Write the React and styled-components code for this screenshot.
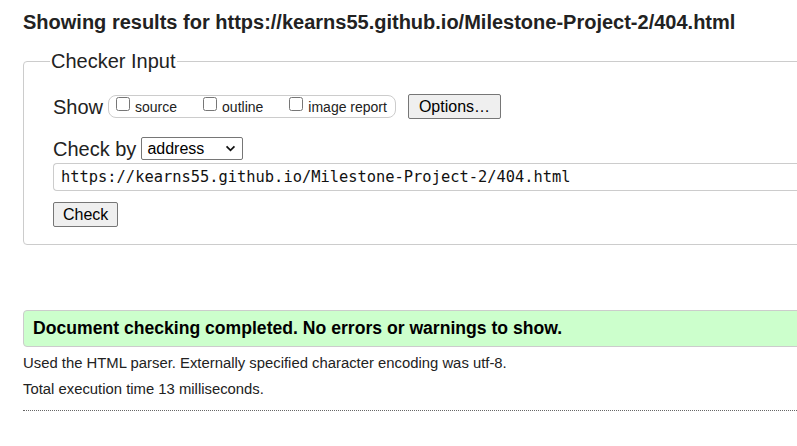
import React, { useState } from "react";
import styled, { createGlobalStyle } from "styled-components";

const url = "https://kearns55.github.io/Milestone-Project-2/404.html";

const GlobalStyle = createGlobalStyle`
  html, body {
    margin: 0;
    padding: 0;
    background: #fff;
    overflow: hidden;
  }
  body {
    font-family: "Liberation Sans", Arial, sans-serif;
    color: #222;
  }
`;

function App() {
  const [show, setShow] = useState({ source: false, outline: false, image: false });
  const [checkBy, setCheckBy] = useState("address");
  const [doc, setDoc] = useState(url);

  const toggle = key => setShow({ ...show, [key]: !show[key] });

  return (
    <Page>
      <GlobalStyle />
      <Heading>Showing results for {url}</Heading>
      <Fieldset>
        <Legend>Checker Input</Legend>
        <Row>
          <Label>Show</Label>
          <CheckGroup>
            <CheckItem>
              <Box type="checkbox" checked={show.source} onChange={() => toggle("source")} />
              source
            </CheckItem>
            <CheckItem>
              <Box type="checkbox" checked={show.outline} onChange={() => toggle("outline")} />
              outline
            </CheckItem>
            <CheckItem>
              <Box type="checkbox" checked={show.image} onChange={() => toggle("image")} />
              image report
            </CheckItem>
          </CheckGroup>
          <Button wide>Options…</Button>
        </Row>
        <Row top={17}>
          <Label>Check by</Label>
          <SelectWrap>
            <Select value={checkBy} onChange={e => setCheckBy(e.target.value)}>
              <option value="address">address</option>
              <option value="upload">file upload</option>
              <option value="text">text input</option>
            </Select>
            <Chevron viewBox="0 0 12 8">
              <path d="M1.5 1.5 L6 6 L10.5 1.5" fill="none" stroke="#111" strokeWidth="2" />
            </Chevron>
          </SelectWrap>
        </Row>
        <UrlInput value={doc} onChange={e => setDoc(e.target.value)} />
        <Row top={11}>
          <Button>Check</Button>
        </Row>
      </Fieldset>
      <Success>Document checking completed. No errors or warnings to show.</Success>
      <Info>Used the HTML parser. Externally specified character encoding was utf-8.</Info>
      <Info>Total execution time 13 milliseconds.</Info>
      <Rule />
    </Page>
  );
}

const Page = styled.div`
  width: 860px;
  padding: 10px 0 0 23px;
`;

const Heading = styled.h2`
  margin: 0;
  font-size: 20px;
  font-weight: bold;
  line-height: 24px;
  color: #222;
`;

const Fieldset = styled.fieldset`
  margin: 17px 0 0 0;
  padding: 23px 0 17px 29px;
  border: 1px solid #ccc;
  border-radius: 4px;
  min-width: 0;
`;

const Legend = styled.legend`
  margin-left: -3px;
  padding: 0 1px;
  font-size: 20px;
  line-height: 20px;
  color: #222;
`;

const Row = styled.div`
  display: flex;
  align-items: center;
  height: 25px;
  margin-top: ${p => (p.top ? p.top : 0)}px;
`;

const Label = styled.span`
  font-size: 20px;
  line-height: 24px;
  margin-right: 5px;
`;

const CheckGroup = styled.div`
  display: flex;
  align-items: center;
  gap: 26px;
  height: 21px;
  padding: 0 8px 0 7px;
  border: 1px solid #ccc;
  border-radius: 8px;
  margin-right: 12px;
`;

const CheckItem = styled.label`
  display: flex;
  align-items: center;
  font-size: 14px;
  color: #222;
`;

const Box = styled.input`
  width: 14px;
  height: 14px;
  margin: 0 5px 5px 0;
`;

const Button = styled.button`
  font-family: "Liberation Sans", Arial, sans-serif;
  font-size: 16px;
  color: #000;
  height: 25px;
  padding: 0 ${p => (p.wide ? 10 : 9)}px;
  background: #efefef;
  border: 1px solid #767676;
  border-radius: 2px;
`;

const SelectWrap = styled.div`
  position: relative;
  display: inline-flex;
`;

const Select = styled.select`
  appearance: none;
  width: 102px;
  height: 23px;
  padding: 0 0 0 5px;
  font-family: "Liberation Sans", Arial, sans-serif;
  font-size: 16px;
  color: #000;
  background: #fff;
  border: 1px solid #767676;
  border-radius: 2px;
`;

const Chevron = styled.svg`
  position: absolute;
  right: 7px;
  top: 8px;
  width: 11px;
  height: 7px;
  pointer-events: none;
`;

const UrlInput = styled.input`
  display: block;
  box-sizing: border-box;
  width: 100%;
  height: 28px;
  margin-top: 2px;
  padding: 0 7px;
  font-family: "DejaVu Sans Mono", "Liberation Mono", monospace;
  font-size: 15.4px;
  color: #111;
  border: 1px solid #ccc;
  border-right: none;
  border-radius: 4px 0 0 4px;
  outline: none;
`;

const Success = styled.p`
  margin: 65px 0 0 0;
  padding: 0 9px;
  height: 35px;
  display: flex;
  align-items: center;
  font-size: 17.6px;
  font-weight: bold;
  color: #000;
  background: #ccffcc;
  border: 1px solid #ccc;
  border-radius: 4px;
`;

const Info = styled.p`
  margin: 7px 0 0 0;
  font-size: 14.85px;
  line-height: 19px;
  color: #222;
`;

const Rule = styled.hr`
  margin: 11px 0 0 0;
  border: none;
  border-top: 1px dotted #666;
`;

export default App;
